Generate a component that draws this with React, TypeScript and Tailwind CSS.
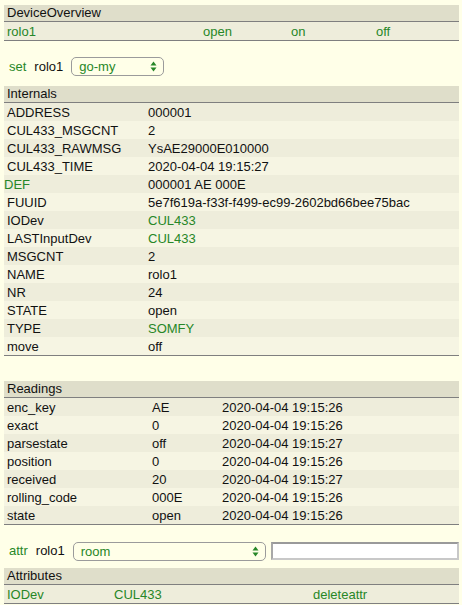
import React from "react";

type Cell = { text: string; link?: boolean };

const internals: [Cell, Cell][] = [
  [{ text: "ADDRESS" }, { text: "000001" }],
  [{ text: "CUL433_MSGCNT" }, { text: "2" }],
  [{ text: "CUL433_RAWMSG" }, { text: "YsAE29000E010000" }],
  [{ text: "CUL433_TIME" }, { text: "2020-04-04 19:15:27" }],
  [{ text: "DEF", link: true }, { text: "000001 AE 000E" }],
  [{ text: "FUUID" }, { text: "5e7f619a-f33f-f499-ec99-2602bd66bee75bac" }],
  [{ text: "IODev" }, { text: "CUL433", link: true }],
  [{ text: "LASTInputDev" }, { text: "CUL433", link: true }],
  [{ text: "MSGCNT" }, { text: "2" }],
  [{ text: "NAME" }, { text: "rolo1" }],
  [{ text: "NR" }, { text: "24" }],
  [{ text: "STATE" }, { text: "open" }],
  [{ text: "TYPE" }, { text: "SOMFY", link: true }],
  [{ text: "move" }, { text: "off" }],
];

const readings = [
  ["enc_key", "AE", "2020-04-04 19:15:26"],
  ["exact", "0", "2020-04-04 19:15:26"],
  ["parsestate", "off", "2020-04-04 19:15:27"],
  ["position", "0", "2020-04-04 19:15:26"],
  ["received", "20", "2020-04-04 19:15:27"],
  ["rolling_code", "000E", "2020-04-04 19:15:26"],
  ["state", "open", "2020-04-04 19:15:26"],
];

function Header({ title }: { title: string }) {
  return (
    <div className="h-[17px] bg-[#DFDECA] border-b border-[#7f7f7f] pl-[3px] leading-[16px]">
      {title}
    </div>
  );
}

function Arrows() {
  return (
    <svg width="7" height="11" viewBox="0 0 7 11" className="shrink-0">
      <path d="M3.5 0.5 L6.5 4.5 L0.5 4.5 Z" fill="#278727" />
      <path d="M3.5 10.5 L6.5 6.5 L0.5 6.5 Z" fill="#278727" />
    </svg>
  );
}

function FakeSelect({ value, width }: { value: string; width: string }) {
  return (
    <div
      className={`${width} h-[19px] flex items-center justify-between rounded-[5px] border border-[#9b9b9b] pl-[7px] pr-[6px] text-[#278727] text-[13px]`}
    >
      <span className="leading-none">{value}</span>
      <Arrows />
    </div>
  );
}

export default function App() {
  return (
    <div className="min-h-screen bg-[#FFFFE8] pl-1 pr-[3px] pt-[5px] text-[13px] text-[#111] font-['Liberation_Sans',Arial,sans-serif]">
      {/* DeviceOverview */}
      <Header title="DeviceOverview" />
      <div className="border-b border-[#7f7f7f]">
        <div className="h-[18px] grid grid-cols-[196px_88px_85px_1fr] items-center bg-[#EEEDDB] pl-[3px] text-[#278727]">
          <span>rolo1</span>
          <span>open</span>
          <span>on</span>
          <span>off</span>
        </div>
      </div>

      {/* set */}
      <div className="mt-4 mb-[10px] flex items-center h-[19px] pl-[5px]">
        <span className="text-[#278727]">set</span>
        <span className="ml-[8px]">rolo1</span>
        <div className="ml-[8px]">
          <FakeSelect value="go-my" width="w-[93px]" />
        </div>
      </div>

      {/* Internals */}
      <Header title="Internals" />
      <div className="border-b border-[#7f7f7f]">
        {internals.map(([name, value], i) => (
          <div
            key={name.text}
            className={`h-[18px] grid grid-cols-[144px_1fr] items-center ${i % 2 === 0 ? "bg-[#EEEDDB]" : "bg-[#F6F5E3]"}`}
          >
            <span className={name.link ? "text-[#278727]" : "pl-[3px]"}>{name.text}</span>
            <span className={value.link ? "text-[#278727]" : ""}>{value.text}</span>
          </div>
        ))}
      </div>

      {/* Readings */}
      <div className="mt-[25px]">
        <Header title="Readings" />
      </div>
      <div className="border-b border-[#7f7f7f]">
        {readings.map(([name, value, time], i) => (
          <div
            key={name}
            className={`h-[18px] grid grid-cols-[145px_70px_1fr] items-center pl-[3px] ${i % 2 === 0 ? "bg-[#EEEDDB]" : "bg-[#F6F5E3]"}`}
          >
            <span>{name}</span>
            <span>{value}</span>
            <span>{time}</span>
          </div>
        ))}
      </div>

      {/* attr */}
      <div className="mt-[17px] mb-[8px] flex items-center h-[18px] pl-[5px]">
        <span className="text-[#278727]">attr</span>
        <span className="ml-[8px]">rolo1</span>
        <div className="ml-[8px]">
          <FakeSelect value="room" width="w-[193px]" />
        </div>
        <div className="ml-[5px] h-[18px] w-[188px] bg-white border-2 border-t-[#9a9a9a] border-l-[#a8a8a8] border-r-[#c8c8c8] border-b-[#c8c8c8]" />
      </div>

      {/* Attributes */}
      <Header title="Attributes" />
      <div className="border-b border-[#7f7f7f]">
        <div className="h-[18px] grid grid-cols-[107px_199px_1fr] items-center bg-[#EEEDDB] pl-[3px] text-[#278727]">
          <span>IODev</span>
          <span>CUL433</span>
          <span>deleteattr</span>
        </div>
      </div>
    </div>
  );
}
